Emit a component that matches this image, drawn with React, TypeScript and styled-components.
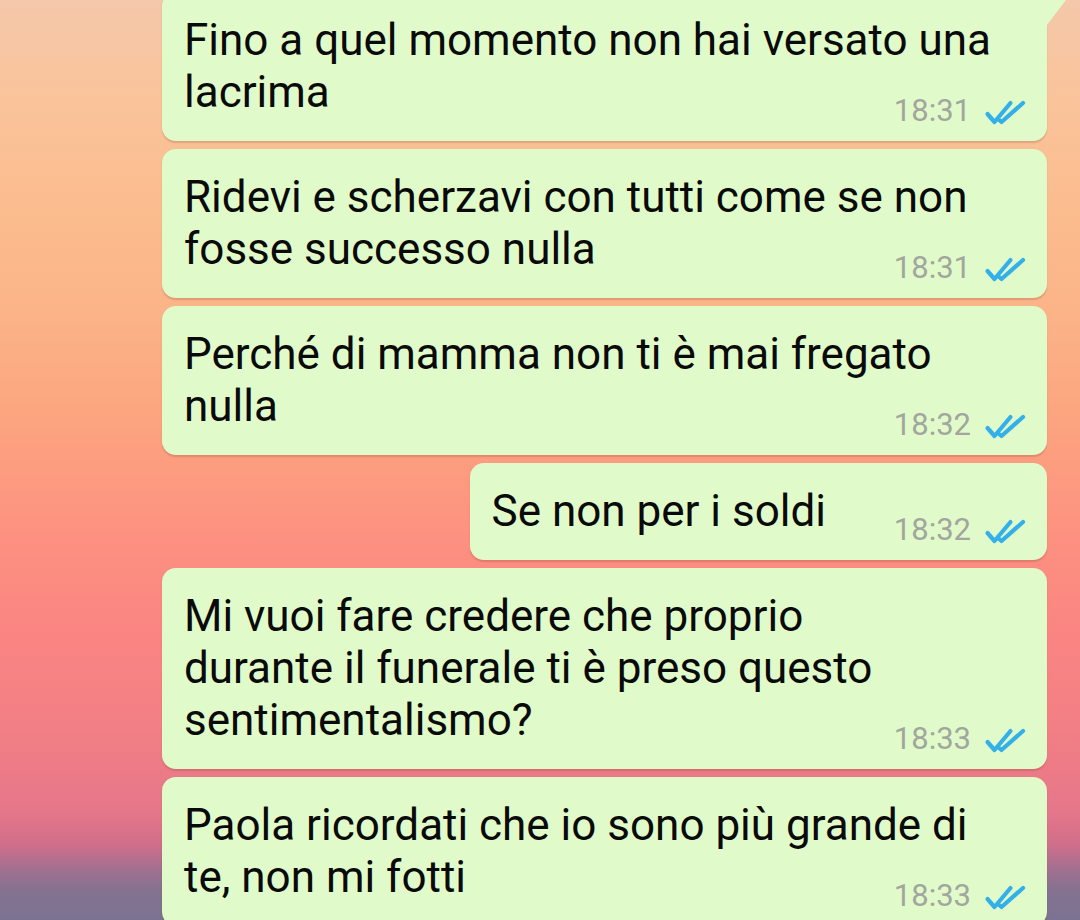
import React from "react";
import styled, { createGlobalStyle } from "styled-components";

const GlobalStyle = createGlobalStyle`
  html, body {
    margin: 0;
    padding: 0;
    height: 920px;
    overflow: hidden;
  }
  body {
    font-family: Roboto, "Noto Sans", Arial, sans-serif;
    background: linear-gradient(
      to bottom,
      #f4c8aa 0px,
      #fac49c 90px,
      #fbbd8f 200px,
      #fbb487 310px,
      #fca47f 420px,
      #fd9280 530px,
      #fa8582 630px,
      #f27f85 730px,
      #e6778a 810px,
      #d06e8a 845px,
      #a47090 868px,
      #857290 890px,
      #7b7392 920px
    );
  }
`;

const Chat = styled.main`
  display: flex;
  flex-direction: column;
  align-items: flex-end;
  gap: 8px;
  margin-top: -8px;
  padding-right: 33px;
`;

const Bubble = styled.div<{ $tail?: boolean; $wide?: boolean }>`
  position: relative;
  box-sizing: border-box;
  width: ${(p) => (p.$wide ? "885px" : "fit-content")};
  max-width: 885px;
  display: flex;
  flex-direction: column;
  padding: 22px 21px 14px 22px;
  background: #e0fbc9;
  border-radius: 14px;
  border-top-right-radius: ${(p) => (p.$tail ? "0" : "14px")};
  box-shadow: 0 1.5px 1.5px rgba(120, 60, 40, 0.22);

  &::after {
    content: "";
    display: ${(p) => (p.$tail ? "block" : "none")};
    position: absolute;
    top: 0;
    right: -25px;
    width: 25px;
    height: 33px;
    background: #e0fbc9;
    clip-path: polygon(0 0, 100% 0, 0 100%);
  }
`;

const Text = styled.div`
  font-size: 44px;
  line-height: 52px;
  color: #0a0a0a;
  white-space: pre-line;
`;

const Spacer = styled.span`
  display: inline-block;
  width: 200px;
`;

const Meta = styled.div`
  align-self: flex-end;
  display: flex;
  align-items: center;
  gap: 13px;
  margin-top: -23px;
  height: 32px;
`;

const Time = styled.span`
  font-size: 31px;
  line-height: 32px;
  color: #a2a69e;
`;

const Ticks = styled.svg`
  width: 42px;
  height: 26px;
  margin-top: 4px;
  display: block;
`;

const DoubleTick = () => (
  <Ticks viewBox="0 0 42 26" fill="none">
    <path
      d="M3.5 14 L10.5 22 L26.5 3"
      stroke="#33b0ea"
      strokeWidth="4.2"
      strokeLinecap="round"
      strokeLinejoin="round"
    />
    <path
      d="M14.5 19.5 L17.5 22 L39 3"
      stroke="#33b0ea"
      strokeWidth="4.2"
      strokeLinecap="round"
      strokeLinejoin="round"
    />
  </Ticks>
);

type Msg = { text: string; time: string };

const messages: Msg[] = [
  { text: "Fino a quel momento non hai versato una\nlacrima", time: "18:31" },
  { text: "Ridevi e scherzavi con tutti come se non\nfosse successo nulla", time: "18:31" },
  { text: "Perché di mamma non ti è mai fregato\nnulla", time: "18:32" },
  { text: "Se non per i soldi", time: "18:32" },
  {
    text: "Mi vuoi fare credere che proprio\ndurante il funerale ti è preso questo\nsentimentalismo?",
    time: "18:33",
  },
  { text: "Paola ricordati che io sono più grande di\nte, non mi fotti", time: "18:33" },
];

export default function App() {
  return (
    <>
      <GlobalStyle />
      <Chat>
        {messages.map((m, i) => (
          <Bubble key={i} $tail={i === 0} $wide={m.text.includes("\n")}>
            <Text>
              {m.text}
              <Spacer />
            </Text>
            <Meta>
              <Time>{m.time}</Time>
              <DoubleTick />
            </Meta>
          </Bubble>
        ))}
      </Chat>
    </>
  );
}
